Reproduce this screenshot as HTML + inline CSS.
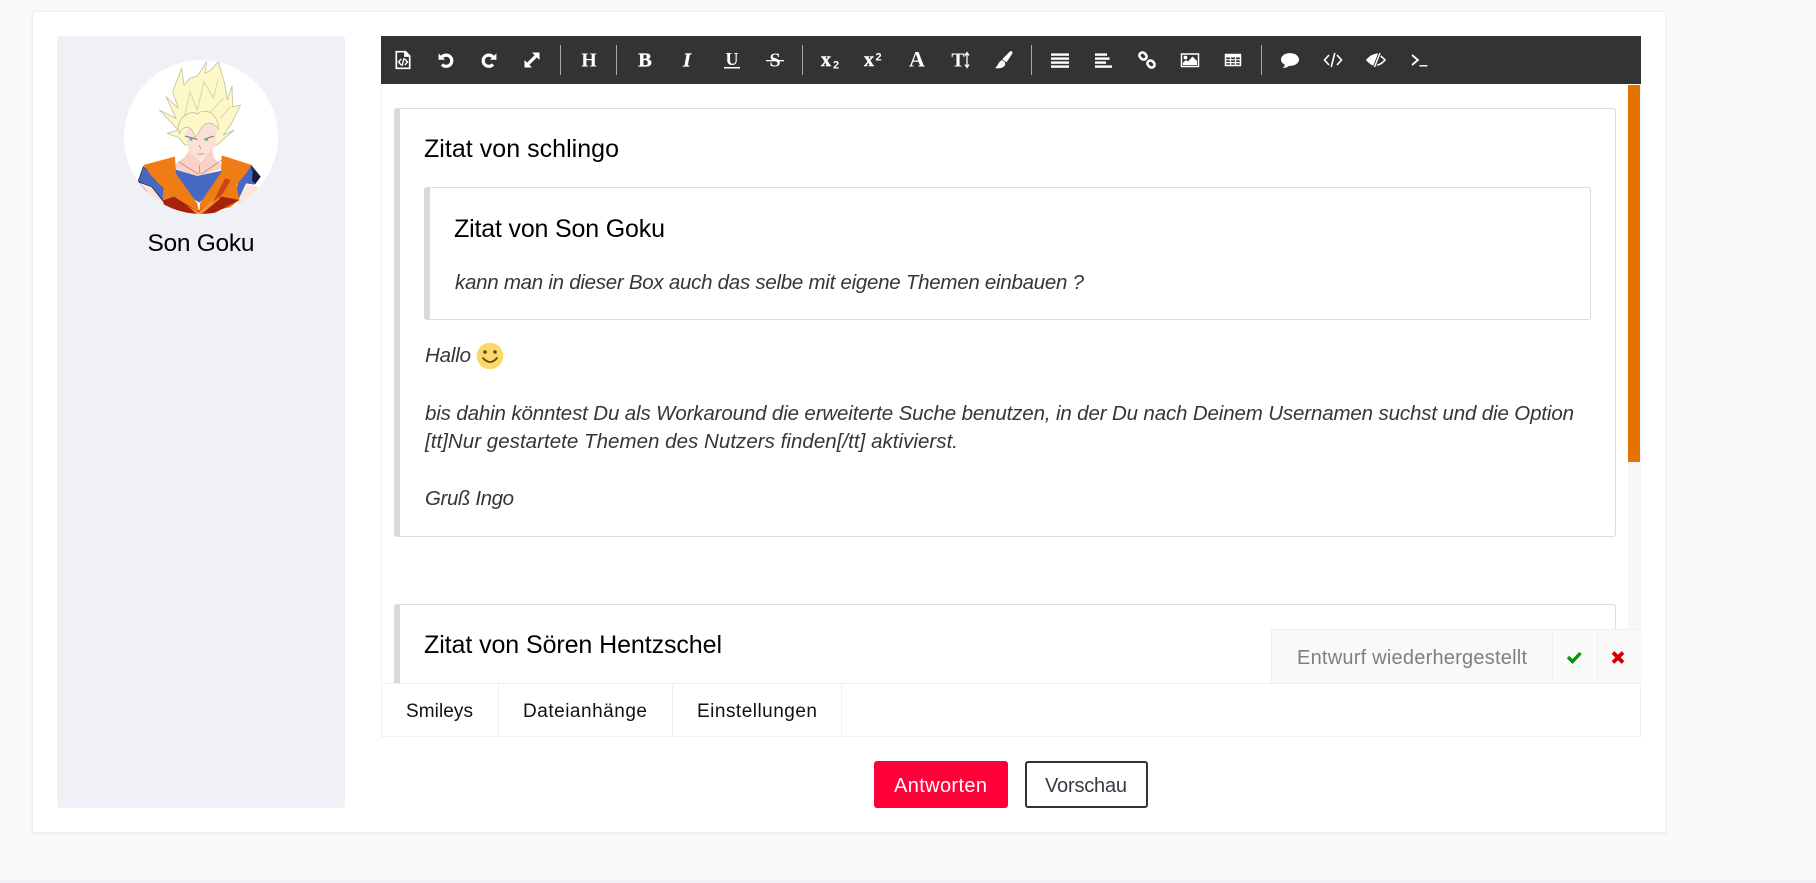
<!DOCTYPE html>
<html lang="de">
<head>
<meta charset="utf-8">
<title>Antworten</title>
<style>
html,body{margin:0;padding:0;width:1816px;height:883px;overflow:hidden;background:#f9f9fa}
.a{position:absolute;box-sizing:border-box}
text{font-family:"Liberation Sans",sans-serif}
.serif{font-family:"Liberation Serif",serif;font-weight:700;fill:#fff}
.q{background:#fff;border:1.3px solid #dcdcdf;border-left:6px solid #d8d9de;border-radius:3px}
</style>
</head>
<body>
<div class="a" style="left:0;top:880px;width:1816px;height:3px;background:#f0f1f6"></div>
<div class="a" style="left:32px;top:11px;width:1634px;height:822px;background:#fff;border:1px solid #f1f1f3;box-shadow:0 1px 2px rgba(0,0,0,.06)"></div>
<div class="a" style="left:57px;top:36px;width:288px;height:772px;background:#f0f1f7;border-radius:3px"></div>

<svg class="a" style="left:110px;top:50px" width="180" height="170" viewBox="0 0 540 510">
<defs><clipPath id="c"><circle cx="273" cy="261" r="231"/></clipPath><filter id="bl"><feGaussianBlur stdDeviation="0.9"/></filter></defs>
<circle cx="273" cy="261" r="231" fill="#fff"/>
<g clip-path="url(#c)" filter="url(#bl)">
<polygon fill="#fdf8c8" stroke="#c4c0a0" stroke-width="2.5" stroke-linejoin="round" points="205,262 172,250 205,240 148,180 198,205 168,140 205,175 188,125 215,55 222,105 240,85 262,78 290,35 285,70 305,58 325,35 345,105 352,150 366,108 368,170 392,165 362,225 340,255 372,240 335,272 320,285 225,285"/>
<path d="M222,205 L240,125 L262,180 L282,95 L310,145 L325,85 M298,190 L340,145 M330,205 L362,170" fill="none" stroke="#d8d3a8" stroke-width="3"/>
<polygon fill="#fbd0c6" points="240,295 272,335 305,295 312,325 345,352 262,380 185,352 225,320"/>
<polygon fill="#fbe0d6" points="225,250 250,215 300,210 320,240 315,290 272,330 240,310"/>
<path d="M205,232 C212,190 250,182 262,192 C285,172 325,188 325,238 C308,215 292,215 278,228 C268,240 265,255 255,262 C245,225 222,222 208,252Z" fill="#fdf8c8" stroke="#c4c0a0" stroke-width="2.5"/>
<path d="M225,258 L262,268 M282,268 L312,258" stroke="#7b6d5d" stroke-width="3"/>
<circle cx="243" cy="268" r="4.5" fill="#56b5a4"/><circle cx="290" cy="268" r="4.5" fill="#56b5a4"/>
<path d="M268,285 L272,296 M262,312 L282,312 M268,345 L270,372 M205,335 L265,372 M335,330 L275,372" stroke="#9d8577" stroke-width="2" fill="none"/>
<polygon fill="#4769c4" points="195,358 262,378 335,362 330,405 268,458 210,420"/>
<polygon fill="#fbe4dc" stroke="#3d2320" stroke-width="1.5" points="86,398 128,405 168,455 148,490 118,445 108,422"/>
<polygon fill="#fbe4dc" points="382,462 408,402 444,410 442,470 400,490"/>
<polygon fill="#4769c4" stroke="#131a3b" stroke-width="2" points="84,395 100,350 125,372 168,425 158,452 125,410"/>
<polygon fill="#4769c4" points="378,420 395,362 425,345 452,380 434,404 408,400 385,450"/>
<polygon fill="#131a3b" points="420,345 452,380 436,402 426,392 428,365"/>
<polygon fill="#f07b17" points="100,345 195,320 198,372 262,460 268,492 190,472 158,452 160,415 122,375"/>
<polygon fill="#f07b17" points="425,345 335,316 333,368 270,460 268,492 360,472 388,450 380,405 410,368"/>
<polygon fill="#a6240c" points="158,452 192,440 262,484 335,440 388,450 270,512 170,490"/>
<polygon fill="#f4922e" points="232,468 265,486 320,440 330,446 268,498"/>
<polygon fill="#c9441b" points="345,385 362,390 338,432 308,458"/>
</g>
</svg>

<!-- editor -->
<div class="a" style="left:381px;top:36px;width:1260px;height:700px;background:#fff;border-left:1px solid #f2f2f7;border-right:1px solid #f2f2f7"></div>
<div class="a" style="left:381px;top:36px;width:1260px;height:48px;background:#333"></div>
<div class="a" style="left:1628px;top:85px;width:12px;height:545px;background:#f7f7f9"></div>
<div class="a" style="left:1628px;top:85px;width:12px;height:377px;background:#e67300"></div>

<div class="a q" style="left:394px;top:108px;width:1222px;height:429px"></div>
<div class="a q" style="left:424px;top:187px;width:1167px;height:133px"></div>
<div class="a q" style="left:394px;top:604px;width:1222px;height:100px"></div>

<div class="a" style="left:1271px;top:629px;width:370px;height:54px;background:#f9f9fa;border:1px solid #f0f1f5;border-bottom:0;border-right:0"></div>
<div class="a" style="left:1552px;top:629px;width:1px;height:54px;background:#eef0f6"></div>
<div class="a" style="left:1597px;top:629px;width:1px;height:54px;background:#eef0f6"></div>

<div class="a" style="left:381px;top:683px;width:1260px;height:54px;background:#fff;border:1px solid #f0f1f6"></div>
<div class="a" style="left:498px;top:683px;width:1px;height:54px;background:#f0f1f6"></div>
<div class="a" style="left:672px;top:683px;width:1px;height:54px;background:#f0f1f6"></div>
<div class="a" style="left:841px;top:683px;width:1px;height:54px;background:#f0f1f6"></div>

<div class="a" style="left:874px;top:761px;width:134px;height:47px;background:#ff0039;border-radius:3px"></div>
<div class="a" style="left:1025px;top:761px;width:123px;height:47px;background:#fff;border:2px solid #333;border-radius:3px"></div>

<svg class="a" style="left:0;top:0" width="1816" height="883" viewBox="0 0 1816 883">
<!-- text -->
<text x="201" y="251" text-anchor="middle" font-size="24.5" fill="#000" textLength="107">Son Goku</text>
<text x="424" y="157" font-size="25" fill="#000" textLength="195">Zitat von schlingo</text>
<text x="454" y="237" font-size="25" fill="#000" textLength="211">Zitat von Son Goku</text>
<g font-style="italic" font-size="20.5" fill="#35353d">
<text x="455" y="289" textLength="629">kann man in dieser Box auch das selbe mit eigene Themen einbauen ?</text>
<text x="425" y="362" textLength="46">Hallo</text>
<text x="425" y="420" textLength="1149">bis dahin könntest Du als Workaround die erweiterte Suche benutzen, in der Du nach Deinem Usernamen suchst und die Option</text>
<text x="425" y="448" textLength="533">[tt]Nur gestartete Themen des Nutzers finden[/tt] aktivierst.</text>
<text x="425" y="505" textLength="89">Gruß Ingo</text>
</g>
<text x="424" y="653" font-size="25" fill="#000" textLength="298">Zitat von Sören Hentzschel</text>
<text x="1297" y="664" font-size="20" fill="#7f7f7f" textLength="230">Entwurf wiederhergestellt</text>
<g font-size="19" fill="#111">
<text x="406" y="717" textLength="67">Smileys</text>
<text x="523" y="717" textLength="124">Dateianhänge</text>
<text x="697" y="717" textLength="120">Einstellungen</text>
</g>
<text x="894" y="792" font-size="20" fill="#fff" textLength="93">Antworten</text>
<text x="1045" y="792" font-size="20" fill="#333a45" textLength="82">Vorschau</text>

<!-- smiley -->
<circle cx="490" cy="356" r="13.3" fill="#fcd868"/>
<circle cx="485" cy="352" r="1.8" fill="#5a4a22"/><circle cx="495" cy="352" r="1.8" fill="#5a4a22"/>
<path d="M483,358 Q490,366 497,358" fill="none" stroke="#5a4a22" stroke-width="1.8" stroke-linecap="round"/>

<!-- check / cross -->
<path d="M1568,657 L1572.5,661.5 L1580.5,653" fill="none" stroke="#009a00" stroke-width="3.4"/>
<path d="M1613,652.5 L1623,662.5 M1623,652.5 L1613,662.5" fill="none" stroke="#d40000" stroke-width="3.8"/>

<!-- separators -->
<g fill="#a6a6a6">
<rect x="560" y="45" width="1" height="30"/><rect x="616" y="45" width="1" height="30"/>
<rect x="802" y="45" width="1" height="30"/><rect x="1031" y="45" width="1" height="30"/><rect x="1261" y="45" width="1" height="30"/>
</g>

<!-- toolbar icons -->
<g transform="translate(403,60)" fill="none" stroke="#fff" stroke-width="1.7">
<path d="M-6.7,-8.3 H2.5 L6.7,-4 V8.3 H-6.7 Z"/><path d="M2,-8 V-4 H6.5" fill="#fff"/>
<path d="M-1.8,-1 L-4.5,2 L-1.8,5 M1.8,-1 L4.5,2 L1.8,5 M1,-2 L-1,6" stroke-width="1.4"/>
</g>
<g transform="translate(446,60)"><path d="M-4,-3 A5.6,5.6 0 1 1 -4,4.4" fill="none" stroke="#fff" stroke-width="3.2"/><polygon points="-7.4,-6.6 -7.4,-0.2 -1,-0.2" fill="#fff"/></g>
<g transform="translate(489,60) scale(-1,1)"><path d="M-4,-3 A5.6,5.6 0 1 1 -4,4.4" fill="none" stroke="#fff" stroke-width="3.2"/><polygon points="-7.4,-6.6 -7.4,-0.2 -1,-0.2" fill="#fff"/></g>
<g transform="translate(532,60)" fill="#fff"><path d="M-4,4 L4,-4" stroke="#fff" stroke-width="3.2"/><polygon points="7.5,-7.5 7.5,0 0,-7.5"/><polygon points="-7.5,7.5 -7.5,0 0,7.5"/></g>

<text class="serif" x="589" y="66.5" text-anchor="middle" font-size="20" textLength="17">H</text>
<text class="serif" x="645" y="66.5" text-anchor="middle" font-size="20.5" style="stroke:#fff;stroke-width:.3">B</text>
<text class="serif" x="687" y="66.5" text-anchor="middle" font-size="20.5" font-style="italic" style="stroke:#fff;stroke-width:.3">I</text>
<text class="serif" x="732" y="65" text-anchor="middle" font-size="18">U</text>
<rect x="724" y="67" width="16" height="1.5" fill="#fff"/>
<text class="serif" x="775" y="66.5" text-anchor="middle" font-size="20">S</text>
<rect x="766" y="60" width="18" height="1.3" fill="#fff"/>
<text class="serif" x="826" y="66" text-anchor="middle" font-size="20" style="stroke:#fff;stroke-width:.4">x</text>
<text class="serif" x="836" y="68.5" text-anchor="middle" font-size="11" style="font-family:'Liberation Sans',sans-serif">2</text>
<text class="serif" x="869" y="66" text-anchor="middle" font-size="20" style="stroke:#fff;stroke-width:.4">x</text>
<text class="serif" x="878.5" y="60.5" text-anchor="middle" font-size="11" style="font-family:'Liberation Sans',sans-serif">2</text>
<text class="serif" x="917" y="66.5" text-anchor="middle" font-size="22" textLength="16">A</text>
<text class="serif" x="958" y="66.5" text-anchor="middle" font-size="20">T</text>
<path d="M967,54 V66 M965,55.5 L967,52.5 L969,55.5 M965,64.5 L967,67.5 L969,64.5" fill="none" stroke="#fff" stroke-width="1.3"/>
<g transform="translate(1004,60)" fill="#fff"><path d="M6,-8.6 C7.5,-9.6 9.2,-8 8.2,-6.2 L2.5,2.4 L-1.8,-0.8 Z"/><path d="M-3,0.6 C-1,-0.4 2,2.4 1,5 C0,7.8 -5,9 -9,8 C-6.5,6.8 -6,2.6 -3,0.6Z"/></g>

<g transform="translate(1060,60)" fill="#fff">
<rect x="-9" y="-6.6" width="18" height="2.4"/>
<rect x="-9" y="-2.6" width="18" height="2.4"/>
<rect x="-9" y="1.4" width="18" height="2.4"/>
<rect x="-9" y="5.4" width="18" height="2.4"/>
</g>
<g transform="translate(1095,60)" fill="#fff">
<rect x="0" y="-6.6" width="12" height="2.4"/><rect x="0" y="-2.6" width="14.5" height="2.4"/>
<rect x="0" y="1.4" width="11" height="2.4"/><rect x="0" y="5.4" width="17" height="2.4"/>
</g>
<g transform="translate(1147,60)" fill="none" stroke="#fff" stroke-width="2.6">
<rect x="-3.8" y="-3" width="7.6" height="6" rx="3" transform="translate(-4,-4) rotate(45)"/>
<rect x="-3.8" y="-3" width="7.6" height="6" rx="3" transform="translate(4,4) rotate(45)"/>
</g>
<g transform="translate(1190,60)">
<rect x="-8.5" y="-6" width="17" height="12.5" fill="none" stroke="#fff" stroke-width="1.5"/>
<circle cx="-4.5" cy="-2.5" r="1.9" fill="#fff"/><path d="M-7,5 V2.5 L-4,0 L-2,1.5 L2.5,-3.5 L7,1 V5Z" fill="#fff"/>
</g>
<g transform="translate(1233,60)" fill="none" stroke="#fff">
<rect x="-7.5" y="-5.5" width="15" height="11" stroke-width="1.5"/>
<rect x="-7.5" y="-6" width="15" height="3.4" fill="#fff" stroke="none"/>
<path d="M-2.5,-4 V5 M2.5,-4 V5 M-7,-.2 H7 M-7,2.6 H7" stroke-width="1.2"/>
</g>

<g transform="translate(1290,60)" fill="#fff"><ellipse cx="0" cy="-0.5" rx="9" ry="6.4"/><path d="M-5,3.5 C-5,6 -6,7 -7.5,8 C-4,8 -1.5,6.5 0,5Z"/></g>
<g transform="translate(1333,60)" fill="none" stroke="#fff" stroke-width="1.6"><path d="M-4,-5 L-8.5,0 L-4,5 M4,-5 L8.5,0 L4,5 M1.8,-7 L-1.8,7"/></g>
<g transform="translate(1376,60)">
<path d="M-9,0 Q0,-10.5 9,0 Q0,10.5 -9,0Z" fill="none" stroke="#fff" stroke-width="1.6"/>
<path d="M-9,0 Q-3,-7 2,-6.5 L-2,6 Q-5,5 -9,0Z" fill="#fff"/>
<path d="M4,-7 L-1.5,7" stroke="#333" stroke-width="3.2"/><path d="M4,-7 L-1.5,7" stroke="#fff" stroke-width="1.4"/>
</g>
<g transform="translate(1419.5,60)" fill="none" stroke="#fff"><path d="M-7.5,-5 L-1.5,0 L-7.5,5" stroke-width="1.8"/><path d="M0,5.8 H8" stroke-width="1.4"/></g>
</svg>
</body>
</html>
